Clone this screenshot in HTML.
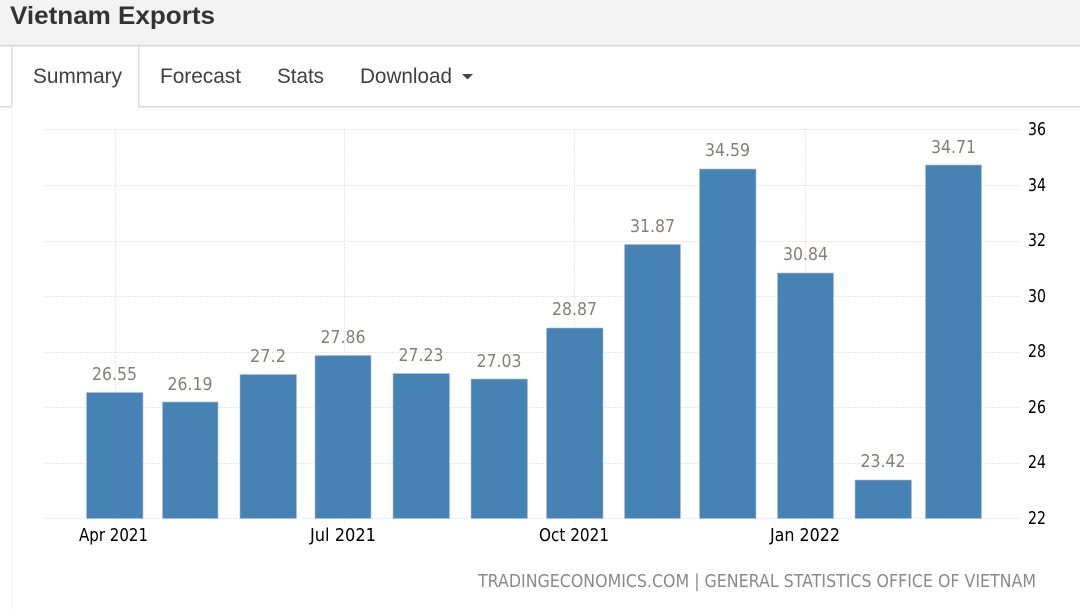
<!DOCTYPE html>
<html>
<head>
<meta charset="utf-8">
<style>
html,body{margin:0;padding:0;background:#fff;width:1080px;height:609px;overflow:hidden}
svg{display:block}
text{font-family:"DejaVu Sans","Liberation Sans",sans-serif}
</style>
</head>
<body>
<svg width="1080" height="609" viewBox="0 0 1080 609" xmlns="http://www.w3.org/2000/svg">
<rect width="1080" height="609" fill="#fff"/>
<rect width="1080" height="45" fill="#f3f3f3"/>
<rect y="45" width="1080" height="1.5" fill="#d4d4d4"/>
<text x="10" y="24" font-size="25" font-weight="700" fill="#333" style="font-family:'Liberation Sans',sans-serif" textLength="205" lengthAdjust="spacingAndGlyphs">Vietnam Exports</text>
<rect x="0" y="106" width="12" height="1.5" fill="#d8d8d8"/>
<rect x="138" y="106" width="942" height="1.5" fill="#d8d8d8"/>
<rect x="11" y="46" width="1.5" height="61" fill="#dcdcdc"/>
<rect x="138" y="46" width="1.5" height="61" fill="#dcdcdc"/>
<rect x="11" y="107" width="1.5" height="502" fill="#f4f4f4"/>
<g font-size="21" fill="#404040">
<text x="33" y="83" style="font-family:'Liberation Sans',sans-serif" textLength="89" lengthAdjust="spacingAndGlyphs">Summary</text>
<text x="160" y="83" style="font-family:'Liberation Sans',sans-serif" textLength="81" lengthAdjust="spacingAndGlyphs">Forecast</text>
<text x="277" y="83" style="font-family:'Liberation Sans',sans-serif" textLength="47" lengthAdjust="spacingAndGlyphs">Stats</text>
<text x="360" y="83" style="font-family:'Liberation Sans',sans-serif" textLength="92" lengthAdjust="spacingAndGlyphs">Download</text>
</g>
<path d="M462 74h11l-5.500 5.500z" fill="#444"/>
<g stroke="#e8e8e8" stroke-width="1" stroke-dasharray="2 1" fill="none">
<path d="M44 129.500H1020M44 185.500H1020M44 241.500H1020M44 296.500H1020M44 352.500H1020M44 407.500H1020M44 463.500H1020M44 518.500H1020"/>
<path d="M115.500 129V524M344.500 129V524M574.500 129V524M805.500 129V524"/>
</g>
<g fill="#4682b4" stroke="#a9c4dc" stroke-width="0.6">
<rect x="86.500" y="392.500" width="56.500" height="126"/>
<rect x="162.500" y="402" width="55.500" height="116.500"/>
<rect x="240" y="374.500" width="56.500" height="144"/>
<rect x="315" y="355.500" width="56" height="163"/>
<rect x="393" y="373.500" width="56.500" height="145"/>
<rect x="471" y="379" width="56.500" height="139.500"/>
<rect x="546.500" y="328" width="56.500" height="190.500"/>
<rect x="624.500" y="244.500" width="56" height="274"/>
<rect x="699.500" y="169" width="56.500" height="349.500"/>
<rect x="777.500" y="273" width="56" height="245.500"/>
<rect x="855" y="480" width="56.500" height="38.500"/>
<rect x="925.500" y="165" width="56" height="353.500"/>
</g>
<g font-size="17.500" fill="#857f7a">
<text x="92" y="380" textLength="45" lengthAdjust="spacingAndGlyphs">26.55</text>
<text x="167.500" y="390" textLength="45" lengthAdjust="spacingAndGlyphs">26.19</text>
<text x="250" y="362" textLength="36" lengthAdjust="spacingAndGlyphs">27.2</text>
<text x="320.500" y="343" textLength="45" lengthAdjust="spacingAndGlyphs">27.86</text>
<text x="398.500" y="361" textLength="45" lengthAdjust="spacingAndGlyphs">27.23</text>
<text x="476.500" y="367" textLength="45" lengthAdjust="spacingAndGlyphs">27.03</text>
<text x="552" y="315" textLength="45" lengthAdjust="spacingAndGlyphs">28.87</text>
<text x="630" y="232" textLength="45" lengthAdjust="spacingAndGlyphs">31.87</text>
<text x="705" y="156" textLength="45" lengthAdjust="spacingAndGlyphs">34.59</text>
<text x="783" y="260" textLength="45" lengthAdjust="spacingAndGlyphs">30.84</text>
<text x="860.500" y="467" textLength="45" lengthAdjust="spacingAndGlyphs">23.42</text>
<text x="931" y="153" textLength="45" lengthAdjust="spacingAndGlyphs">34.71</text>
</g>
<g font-size="17.500" fill="#000">
<text x="79" y="541" textLength="69" lengthAdjust="spacingAndGlyphs">Apr 2021</text>
<text x="310" y="541" textLength="66" lengthAdjust="spacingAndGlyphs">Jul 2021</text>
<text x="539" y="541" textLength="70" lengthAdjust="spacingAndGlyphs">Oct 2021</text>
<text x="770" y="541" textLength="70" lengthAdjust="spacingAndGlyphs">Jan 2022</text>
<text x="1028" y="135" textLength="18" lengthAdjust="spacingAndGlyphs">36</text>
<text x="1028" y="191" textLength="18" lengthAdjust="spacingAndGlyphs">34</text>
<text x="1028" y="246" textLength="18" lengthAdjust="spacingAndGlyphs">32</text>
<text x="1028" y="302" textLength="18" lengthAdjust="spacingAndGlyphs">30</text>
<text x="1028" y="357" textLength="18" lengthAdjust="spacingAndGlyphs">28</text>
<text x="1028" y="413" textLength="18" lengthAdjust="spacingAndGlyphs">26</text>
<text x="1028" y="468" textLength="18" lengthAdjust="spacingAndGlyphs">24</text>
<text x="1028" y="524" textLength="18" lengthAdjust="spacingAndGlyphs">22</text>
</g>
<text x="478" y="587" font-size="17.500" fill="#8a8a8e" textLength="558" lengthAdjust="spacingAndGlyphs">TRADINGECONOMICS.COM | GENERAL STATISTICS OFFICE OF VIETNAM</text>
</svg>
</body>
</html>
